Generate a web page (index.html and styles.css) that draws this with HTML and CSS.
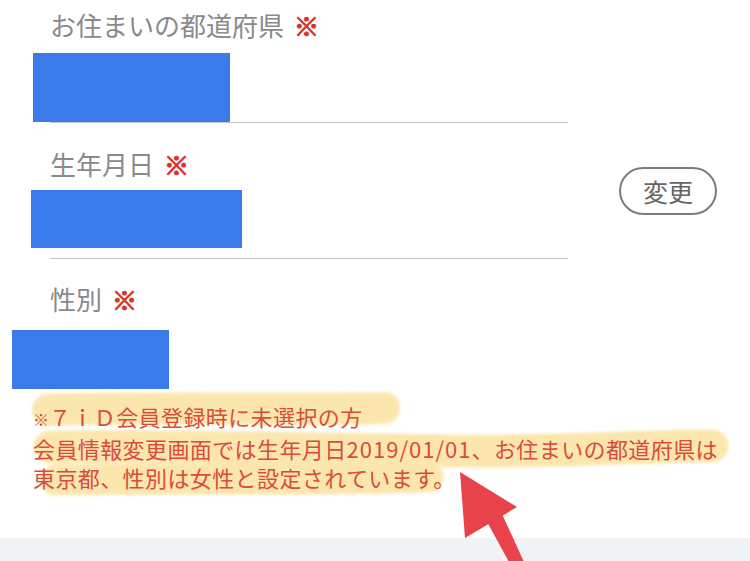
FILE: index.html
```html
<!DOCTYPE html>
<html lang="ja">
<head>
    <meta charset="UTF-8">
    <meta name="viewport" content="width=device-width, initial-scale=1.0">
    <title>会員情報</title>
    <link rel="stylesheet" href="styles.css">
</head>
<body>
    <div class="page">
        <!-- marker highlight drawn over the screenshot, sits behind the note text -->
        <svg class="marker" width="750" height="561" viewBox="0 0 750 561">
            <defs>
                <filter id="soft" x="-5%" y="-50%" width="110%" height="200%">
                    <feGaussianBlur stdDeviation="1.6"/>
                </filter>
            </defs>
            <g opacity="0.6" fill="none" stroke="#f9d77a" stroke-linecap="round" stroke-linejoin="round" filter="url(#soft)">
                <path d="M48 410 C150 407 280 410 384 408" stroke-width="32"/>
                <path d="M50 447 C200 445 330 450 460 451 C560 452 640 446 712 446" stroke-width="33"/>
                <path d="M56 480 C180 478 320 481 428 477" stroke-width="31"/>
            </g>
        </svg>

        <div class="field field-first">
            <div class="label">お住まいの都道府県<span class="req">※</span></div>
            <div class="mask mask-pref"></div>
        </div>

        <div class="row">
            <div class="field field-birth">
                <div class="label">生年月日<span class="req">※</span></div>
                <div class="mask mask-birth"></div>
            </div>
            <button class="btn-change">変更</button>
        </div>

        <div class="field field-last">
            <div class="label">性別<span class="req">※</span></div>
            <div class="mask mask-gender"></div>
        </div>

        <p class="note">
            <span class="note-mark">※</span>７ｉＤ会員登録時に未選択の方<br>
            会員情報変更画面では生年月日<span class="date">2019/01/01</span>、お住まいの都道府県は<br>
            東京都、性別は女性と設定されています。
        </p>

        <div class="band"></div>

        <svg class="arrow" width="750" height="561" viewBox="0 0 750 561">
            <polygon points="460,472 465,538 517,507" fill="#e8434b"/>
            <polygon points="486,520 502,514 524,562 509,562" fill="#e8434b"/>
        </svg>
    </div>
</body>
</html>
```

FILE: styles.css
```css
html, body {
    margin: 0;
    padding: 0;
    background-color: #fff;
}
body {
    font-family: "Noto Sans CJK JP", "Noto Sans", sans-serif;
    color: #8a8a8a;
}
.page {
    position: relative;
    width: 750px;
    height: 561px;
    overflow: hidden;
    display: flex;
    flex-direction: column;
}
.marker {
    position: absolute;
    top: 0;
    left: 0;
    z-index: 0;
}
.arrow {
    position: absolute;
    top: 0;
    left: 0;
    z-index: 3;
}
.field {
    width: 518px;
    margin-left: 50px;
    border-bottom: 1px solid #c6c6c6;
}
.field-first {
    padding-top: 10px;
}
.field-birth {
    padding-top: 26px;
    padding-bottom: 10px;
}
.field-last {
    padding-top: 25px;
    border-bottom: none;
}
.label {
    font-size: 26px;
    line-height: 30px;
    color: #8a8a8a;
    white-space: nowrap;
}
.req {
    color: #d8342c;
    font-size: 25px;
    font-weight: 900;
    -webkit-text-stroke: 1.2px #d8342c;
    margin-left: 10px;
}
.mask {
    background-color: #3b7aea;
}
.mask-pref {
    margin-top: 13px;
    margin-left: -17px;
    width: 197px;
    height: 69px;
}
.mask-birth {
    margin-top: 11px;
    margin-left: -19px;
    width: 211px;
    height: 58px;
}
.mask-gender {
    margin-top: 16px;
    margin-left: -38px;
    width: 157px;
    height: 59px;
}
.row {
    display: flex;
    align-items: center;
}
.btn-change {
    margin-left: auto;
    margin-right: 33px;
    width: 98px;
    height: 48px;
    padding: 0;
    border: 2px solid #7c7c7c;
    border-radius: 24px;
    background-color: #fff;
    font-family: inherit;
    font-size: 25px;
    line-height: 1;
    color: #666;
}
.note {
    position: relative;
    z-index: 1;
    margin: 13px 0 0 33px;
    font-size: 22px;
    line-height: 29px;
    letter-spacing: 0.4px;
    color: #d94c3c;
    white-space: nowrap;
}
.note-mark {
    font-size: 16px;
    letter-spacing: 0;
}
.date {
    letter-spacing: 1px;
}
.band {
    margin-top: auto;
    height: 23px;
    background-color: #f2f3f7;
}
```
